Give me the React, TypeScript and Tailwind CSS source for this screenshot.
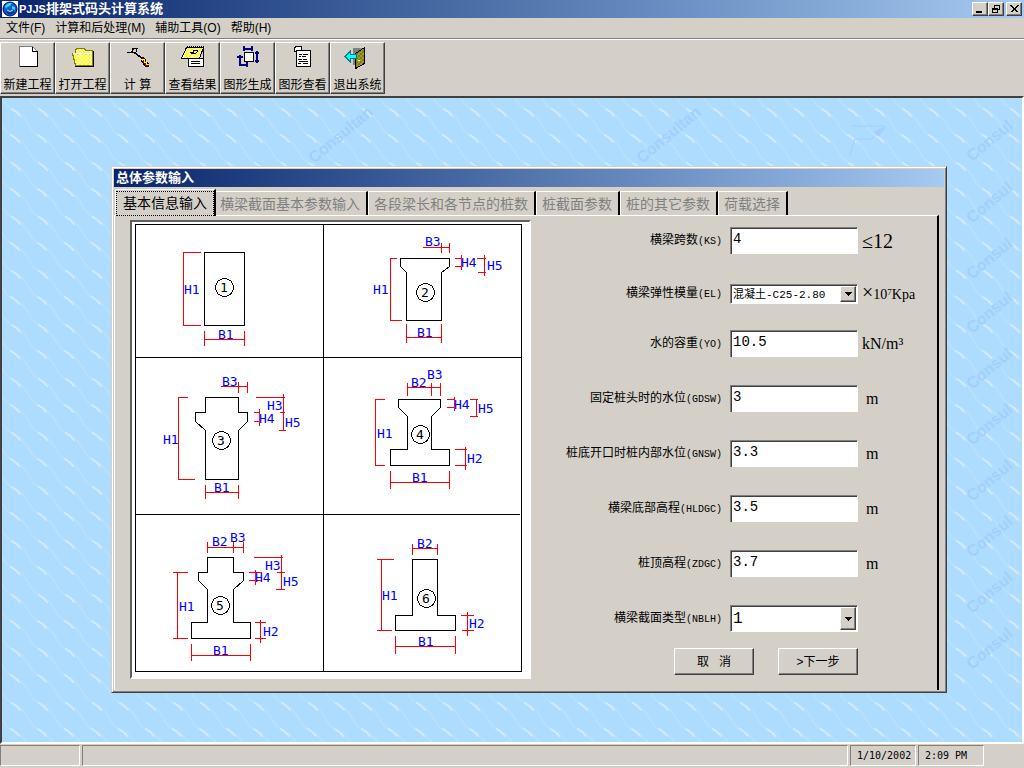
import { useState, type ReactNode } from 'react';

type Line = [number, number, number, number];
type Label = [string, number, number];

interface Section {
  id: number;
  origin: [number, number];
  outline: string;
  dims: Line[];
  labels: Label[];
  badge: [number, number];
}

interface Field {
  id: string;
  name: string;
  code: string;
  value: string;
  options?: string[];
  small?: boolean;
  unit?: ReactNode;
}

const RAISED =
  'border border-t-white border-l-white border-r-[#404040] border-b-[#404040] bg-[#d4d0c8] shadow-[inset_-1px_-1px_0_#808080]';

const SECTIONS: Section[] = [
  {
    id: 1,
    origin: [-2, -2],
    outline: '74,32 114,32 114,105 74,105',
    dims: [
      [53, 32, 53, 105], [52, 32, 70, 32], [52, 105, 70, 105],
      [74, 110, 74, 125], [114, 110, 114, 125], [74, 119, 114, 119],
    ],
    labels: [['H1', 54, 74], ['B1', 88, 119]],
    badge: [94, 67],
  },
  {
    id: 2,
    origin: [188, -2],
    outline: '80,38 129,38 129,46 121,52 121,100 86,100 86,52 80,46',
    dims: [
      [70, 38, 70, 100], [69, 38, 76, 38], [69, 100, 81, 100],
      [86, 103, 86, 122], [121, 103, 121, 122], [86, 117, 121, 117],
      [102, 27, 129, 27], [121, 22, 121, 32], [129, 22, 129, 32],
      [141, 34, 141, 49], [134, 38, 141, 38], [134, 46, 141, 46],
      [164, 34, 164, 55], [156, 38, 165, 38], [157, 52, 165, 52],
    ],
    labels: [['H1', 53, 74], ['B1', 97, 117], ['B3', 105, 26], ['H4', 141, 47], ['H5', 167, 50]],
    badge: [105, 72],
  },
  {
    id: 3,
    origin: [-2, 133],
    outline: '75,42 108,42 108,57 117,57 117,66 108,75 108,124 75,124 75,75 65,66 65,57 75,57',
    dims: [
      [48, 42, 48, 124], [47, 42, 57, 42], [47, 124, 64, 124],
      [75, 129, 75, 143], [108, 129, 108, 143], [75, 137, 108, 137],
      [90, 31, 117, 31], [108, 26, 108, 37], [117, 26, 117, 37],
      [153, 38, 153, 75], [125, 42, 154, 42], [149, 57, 154, 57], [148, 75, 155, 75],
      [129, 53, 129, 70], [123, 57, 129, 57], [123, 66, 129, 66],
    ],
    labels: [['H1', 33, 89], ['B1', 84, 137], ['B3', 92, 31], ['H3', 137, 55], ['H4', 129, 68], ['H5', 155, 72]],
    badge: [91, 85],
  },
  {
    id: 4,
    origin: [188, 133],
    outline: '78,44 120,44 120,52 111,61 111,94 129,94 129,110 70,110 70,94 87,94 87,61 78,52',
    dims: [
      [55, 44, 55, 110], [54, 44, 64, 44], [54, 110, 64, 110],
      [70, 115, 70, 133], [129, 115, 129, 133], [70, 127, 129, 127],
      [87, 32, 120, 32], [87, 27, 87, 40], [111, 27, 111, 40], [120, 27, 120, 40],
      [134, 41, 134, 55], [126, 44, 134, 44], [126, 52, 134, 52],
      [156, 44, 156, 61], [149, 44, 157, 44], [149, 61, 157, 61],
      [145, 91, 145, 114], [134, 94, 146, 94], [134, 110, 146, 110],
    ],
    labels: [
      ['H1', 57, 83], ['B1', 92, 127], ['B2', 91, 32], ['B3', 107, 24],
      ['H4', 134, 54], ['H5', 158, 58], ['H2', 147, 108],
    ],
    badge: [100, 79],
  },
  {
    id: 5,
    origin: [-2, 290],
    outline:
      '77,45 103,45 103,60 113,60 113,68 103,77 103,110 120,110 120,126 61,126 61,110 77,110 77,77 68,68 68,60 77,60',
    dims: [
      [47, 60, 47, 126], [42, 60, 57, 60], [42, 126, 57, 126],
      [77, 35, 113, 35], [77, 29, 77, 40], [103, 29, 103, 40], [113, 29, 113, 40],
      [151, 42, 151, 77], [123, 45, 152, 45], [146, 60, 154, 60], [145, 77, 154, 77],
      [125, 57, 125, 72], [118, 60, 131, 60], [118, 68, 131, 68],
      [130, 107, 130, 130], [124, 110, 135, 110], [124, 126, 135, 126],
      [61, 131, 61, 148], [120, 131, 120, 148], [61, 143, 120, 143],
    ],
    labels: [
      ['H1', 49, 99], ['B1', 83, 143], ['B2', 82, 34], ['B3', 100, 30],
      ['H3', 135, 58], ['H4', 125, 70], ['H5', 153, 74], ['H2', 133, 124],
    ],
    badge: [90, 93],
  },
  {
    id: 6,
    origin: [188, 290],
    outline: '92,47 117,47 117,103 135,103 135,118 75,118 75,103 92,103',
    dims: [
      [61, 47, 61, 118], [56, 47, 73, 47], [56, 118, 71, 118],
      [92, 36, 117, 36], [92, 31, 92, 42], [117, 31, 117, 42],
      [75, 123, 75, 141], [135, 123, 135, 141], [75, 134, 135, 134],
      [147, 99, 147, 123], [140, 103, 153, 103], [141, 118, 153, 118],
    ],
    labels: [['H1', 62, 88], ['B2', 97, 36], ['B1', 98, 134], ['H2', 149, 116]],
    badge: [106, 86],
  },
];

const FIELDS: Field[] = [
  { id: 'ks', name: '横梁跨数', code: '(KS)', value: '4', unit: <span className="text-[20px]">≤12</span> },
  {
    id: 'el',
    name: '横梁弹性模量',
    code: '(EL)',
    value: '混凝土-C25-2.80',
    options: ['混凝土-C25-2.80', '混凝土-C30-3.00'],
    small: true,
    unit: (
      <span className="text-[14px] whitespace-nowrap">
        <span className="text-[20px] leading-none">×</span>10<sup className="text-[9px]">7</sup>Kpa
      </span>
    ),
  },
  { id: 'yo', name: '水的容重', code: '(YO)', value: '10.5', unit: 'kN/m³' },
  { id: 'gdsw', name: '固定桩头时的水位', code: '(GDSW)', value: '3', unit: 'm' },
  { id: 'gnsw', name: '桩底开口时桩内部水位', code: '(GNSW)', value: '3.3', unit: 'm' },
  { id: 'hldgc', name: '横梁底部高程', code: '(HLDGC)', value: '3.5', unit: 'm' },
  { id: 'zdgc', name: '桩顶高程', code: '(ZDGC)', value: '3.7', unit: 'm' },
  { id: 'nblh', name: '横梁截面类型', code: '(NBLH)', value: '1', options: ['1', '2', '3', '4', '5', '6'] },
];

const MENUS = ['文件(F)', '计算和后处理(M)', '辅助工具(O)', '帮助(H)'];

const TABS = ['基本信息输入', '横梁截面基本参数输入', '各段梁长和各节点的桩数', '桩截面参数', '桩的其它参数', '荷载选择'];

const TOOLS: { label: string; icon: ReactNode }[] = [
  {
    label: '新建工程',
    icon: (
      <>
        <path d="M7.5 1.5h13l5 5v15h-18z" fill="#fff" stroke="#808080" />
        <path d="M20.5 1.5v5h5v15h-18" fill="none" stroke="#000" />
      </>
    ),
  },
  {
    label: '打开工程',
    icon: (
      <>
        <path d="M8.500 8V5l2-2h6l2 2h7v3" fill="url(#dither)" stroke="#808000" />
        <path d="M5.500 8.500h20v12h-17z" fill="url(#dither)" stroke="#808000" />
        <path d="M5.500 8.500h19" stroke="#fff" />
        <path d="M8 21.500h18.500M26.500 6v15" stroke="#000" />
      </>
    ),
  },
  {
    label: '计 算',
    icon: (
      <>
        <path d="M5 7.500h7l3 2M10 7.500l1-4h4l-1 3M13 8l8 6" fill="none" stroke="#000" strokeWidth="1.500" />
        <path d="M19 12l3 1 5 7-1 2-3-1-4-6z" fill="#800000" stroke="#000" />
        <path d="M20 14l5 6M22 14l4 6" stroke="#ff0" strokeWidth="1.500" strokeDasharray="2 1" />
      </>
    ),
  },
  {
    label: '查看结果',
    icon: (
      <>
        <path d="M11.500 13.500h15v8h-15z" fill="#fff" stroke="#000" />
        <path d="M9.500 2.500h17l-4 11h-18z" fill="url(#dither)" stroke="#000" />
        <path d="M10 2h17" stroke="#000" strokeWidth="2" strokeDasharray="1 1" />
        <path d="M13 7.500h3l1-2h4M14 8.500h4l3-2M14 16.500h9M14 18.500h9M26.500 3v19" fill="none" stroke="#000" />
      </>
    ),
  },
  {
    label: '图形生成',
    icon: (
      <>
        <path d="M12.500 7.500h9v9h-9z" fill="#fff" stroke="#000" />
        <path d="M12 1v5M20 1v5M12 3.500h8M25 6v12M23 7.500h4M23 15.500h4" stroke="#000080" strokeWidth="2" />
        <path d="M8 10v10M5 11.500h6M7 20h9M15 17v5" stroke="#000080" strokeWidth="2" />
      </>
    ),
  },
  {
    label: '图形查看',
    icon: (
      <>
        <path d="M9.500 5.500h14v16h-14z" fill="#fff" stroke="#000" />
        <path d="M7 3l3-2h4l1 4h-4l-3 2z" fill="#fff" stroke="#000" />
        <path
          d="M12 9.500h3M16 9.500h5M12 11.500h2M15 11.500h4M11 14.500h4M16 14.500h4M12 16.500h9M11 18.500h3M16 18.500h5"
          stroke="#000"
        />
      </>
    ),
  },
  {
    label: '退出系统',
    icon: (
      <>
        <path d="M11 2.500h11v17H11z" fill="#808080" />
        <path d="M13.500 8.500l9-6v16l-9 5z" fill="#808000" stroke="#000" />
        <path d="M15 9l7-4v13l-7 4z" fill="url(#rust)" />
        <path d="M3 11.500l5-5v3h6v4H8v3z" fill="#0ff" stroke="#008080" />
        <path d="M16 15h2" stroke="#fff" />
      </>
    ),
  },
];

function WaterBackground() {
  const marks = [64, 126, 182, 236, 292, 348, 404, 460, 516, 572];
  return (
    <svg className="absolute inset-0 h-full w-full" aria-hidden="true">
      <defs>
        <pattern id="waves" width="27" height="54" patternUnits="userSpaceOnUse">
          <rect width="27" height="54" fill="#addcff" />
          {[-54, -27, 0, 27].map((x) => (
            <g key={x} fill="none" transform={`translate(${x} 0)`}>
              <path d="M0 0q4 9 12 12t15 15q4 9 12 12t15 15" stroke="#b8e0fc" strokeWidth="2" />
              <path d="M10 11q5 3 8 7M36 37q5 3 8 7" stroke="#d2ebfb" strokeWidth="2" strokeLinecap="round" />
            </g>
          ))}
        </pattern>
      </defs>
      <rect width="100%" height="100%" fill="url(#waves)" />
      <g fill="#a2cffb" className="font-['Liberation_Sans',sans-serif] text-[16px] font-bold">
        <text transform="translate(312 66) rotate(-40)">Consultan</text>
        <text transform="translate(640 66) rotate(-40)">Consultan</text>
        {marks.map((y) => (
          <text key={y} transform={`translate(970 ${y}) rotate(-40)`}>
            Consul
          </text>
        ))}
      </g>
      <path d="M849 28h34l-14 13h-16l-5 16" fill="none" stroke="#a2cffb" />
      <path d="M872 33l12-4-8 10z" fill="#a2cffb" />
    </svg>
  );
}

function SectionDrawing({ section }: { section: Section }) {
  const [x, y] = section.origin;
  const [cx, cy] = section.badge;
  return (
    <g transform={`translate(${x} ${y})`}>
      <g transform="translate(0.5 0.5)" fill="none" shapeRendering="crispEdges">
        {section.dims.map(([x1, y1, x2, y2]) => (
          <line key={`${x1}-${y1}-${x2}-${y2}`} x1={x1} y1={y1} x2={x2} y2={y2} stroke="#f00" />
        ))}
        <polygon points={section.outline} stroke="#000" />
        <circle cx={cx} cy={cy} r="9" stroke="#000" />
      </g>
      <g fill="#00f">
        {section.labels.map(([text, lx, ly]) => (
          <text key={text} x={lx} y={ly}>
            {text}
          </text>
        ))}
      </g>
      <text x={cx} y={cy + 5} textAnchor="middle">
        {section.id}
      </text>
    </g>
  );
}

function SectionChart() {
  return (
    <div className="w-[401px] shrink-0 self-start border-2 border-t-[#606060] border-r-white border-b-white border-l-[#606060] bg-white">
      <svg viewBox="0 0 397 455" className="block w-full font-['DejaVu_Sans_Mono',monospace] text-[13px]" role="img">
        <g fill="none" stroke="#000" shapeRendering="crispEdges">
          <rect x="3.5" y="2.5" width="386" height="447" />
          <path d="M191.5 2.5v447M3.5 135.5h386M3.5 292.5h384" />
        </g>
        {SECTIONS.map((section) => (
          <SectionDrawing key={section.id} section={section} />
        ))}
      </svg>
    </div>
  );
}

function FieldRow({ field }: { field: Field }) {
  const [value, setValue] = useState(field.value);
  const height = field.small ? 'h-5' : 'h-[27px]';

  return (
    <div className={`grid grid-cols-[1fr_128px_79px] items-center ${height}`}>
      <label htmlFor={field.id} className="pr-2 text-right text-[12px] leading-4 whitespace-nowrap">
        {field.name}
        <span className="font-['Liberation_Mono',monospace] text-[10px]">{field.code}</span>
      </label>
      {field.options ? (
        <div
          className={`relative border border-t-[#808080] border-r-white border-b-white border-l-[#808080] bg-white shadow-[inset_1px_1px_0_#404040] ${height}`}
        >
          <select
            id={field.id}
            value={value}
            onChange={(event) => setValue(event.target.value)}
            className={`h-full w-full appearance-none bg-transparent pr-5 pl-0.5 font-['Liberation_Mono','Noto_Sans_CJK_SC',monospace] outline-none ${
              field.small ? 'text-[11px]' : 'text-[16px]'
            }`}
          >
            {field.options.map((option) => (
              <option key={option}>{option}</option>
            ))}
          </select>
          <span
            className={`pointer-events-none absolute inset-y-px right-px flex w-4 items-center justify-center ${RAISED}`}
          >
            <svg width="7" height="4" shapeRendering="crispEdges">
              <path d="M0 0h7L3.500 4z" />
            </svg>
          </span>
        </div>
      ) : (
        <input
          id={field.id}
          type="text"
          value={value}
          onChange={(event) => setValue(event.target.value)}
          className="h-[27px] w-full border-t border-r border-l border-t-[#808080] border-r-white border-l-[#808080] bg-white pb-1 pl-0.5 font-['Liberation_Mono',monospace] text-[14px] shadow-[inset_1px_1px_0_#404040] outline-none"
        />
      )}
      <span
        className={`flex items-center font-['Liberation_Serif',serif] text-[16px] leading-5 ${
          field.unit === 'm' ? 'pl-2' : 'pl-1'
        }`}
      >
        {field.unit}
      </span>
    </div>
  );
}

function ParameterDialog() {
  const [activeTab] = useState(0);

  return (
    <section
      className="relative border border-t-[#d4d0c8] border-r-[#404040] border-b-[#404040] border-l-[#d4d0c8] bg-[#d4d0c8] p-0.5 shadow-[inset_1px_1px_0_#fff,inset_-1px_-1px_0_#808080]"
      aria-label="总体参数输入"
    >
      <h2 className="h-[18px] bg-linear-to-r from-[#0a246a] to-[#a6caf0] pl-0.5 text-[13px] leading-[18px] font-bold text-white">
        总体参数输入
      </h2>
      <div className="flex items-end pt-0.5 pl-px" role="tablist">
        {TABS.map((tab, index) => (
          <button
            key={tab}
            type="button"
            role="tab"
            aria-selected={index === activeTab}
            disabled={index !== activeTab}
            className={`border-t border-r-2 border-l border-t-white border-r-black border-l-white bg-[#d4d0c8] text-[14px] leading-5 whitespace-nowrap ${
              index === activeTab
                ? 'relative z-10 -mr-0.5 -mb-px h-[27px]'
                : 'h-6 pr-[6px] pl-[5px] text-[#808080]'
            }`}
          >
            {index === activeTab ? (
              <span className="block h-[25px] border border-dotted border-black px-1.5 leading-[22px]">{tab}</span>
            ) : (
              tab
            )}
          </button>
        ))}
      </div>
      <div
        className="mr-[5px] flex border-t border-r-2 border-l border-t-white border-r-black border-l-white pt-1 pb-[11px] pl-[15px]"
        role="tabpanel"
      >
        <SectionChart />
        <form className="flex-1 pt-[7px]" onSubmit={(event) => event.preventDefault()}>
          <div className="flex flex-col gap-7">
            {FIELDS.map((field) => (
              <FieldRow key={field.id} field={field} />
            ))}
          </div>
          <div className="mt-4 flex justify-end gap-6 pr-[79px]">
            <button type="button" className={`h-[27px] w-20 text-[12px] whitespace-pre ${RAISED}`}>
              {'取   消'}
            </button>
            <button type="submit" className={`h-[27px] w-20 text-[12px] ${RAISED}`}>
              &gt;下一步
            </button>
          </div>
        </form>
      </div>
    </section>
  );
}

function WindowButton({ label, children }: { label: string; children: ReactNode }) {
  return (
    <button type="button" aria-label={label} className={`flex h-3.5 w-4 items-center justify-center ${RAISED}`}>
      <svg width="12" height="10" viewBox="0 0 12 10" fill="none" stroke="#000" shapeRendering="crispEdges">
        {children}
      </svg>
    </button>
  );
}

export default function App() {
  return (
    <div className="flex min-h-screen flex-col bg-[#d4d0c8] font-['Liberation_Sans','Noto_Sans_CJK_SC',sans-serif] text-[12px] text-black">
      <header className="flex h-[18px] items-center bg-linear-to-r from-[#0a246a] to-[#a6caf0] px-0.5">
        <svg width="16" height="16" viewBox="0 0 16 16" aria-hidden="true">
          <rect width="16" height="16" fill="#fff" />
          <circle cx="8" cy="8" r="7" fill="#0060d0" stroke="#000060" />
          <path d="M3 5q3-4 7-3l-2 3-3 1-1 2zM10 5l3 1v3l-3-1z" fill="#40d0ff" />
          <path d="M4 9q4 5 8 0v3q-4 3-7 0z" fill="#003090" />
          <path d="M5 9q3 3 6 0" fill="none" stroke="#a0f0ff" />
        </svg>
        <h1 className="ml-px flex flex-1 items-center text-[13px] leading-4 font-bold whitespace-nowrap text-white">
          <span className="text-[11px]">PJJS</span>排架式码头计算系统
        </h1>
        <WindowButton label="最小化">
          <path d="M2 8h6" strokeWidth="2" />
        </WindowButton>
        <WindowButton label="还原">
          <path d="M4.500 4V1.500h5v4H8M4 1.500h6M2.500 4.500h5v4h-5zM2 5h6" />
        </WindowButton>
        <span className="w-0.5" />
        <WindowButton label="关闭">
          <path d="M2.500 1.500l7 7M3.500 1.500l7 7M9.500 1.500l-7 7M10.500 1.500l-7 7" />
        </WindowButton>
      </header>

      <nav className="flex h-[21px] items-center border-b border-[#808080] pl-px">
        {MENUS.map((menu) => (
          <button key={menu} type="button" className="px-[5px] leading-4">
            {menu}
          </button>
        ))}
      </nav>

      <div className="flex h-[57px] border-t border-white pt-0.5" role="toolbar">
        <svg width="0" height="0" className="absolute" aria-hidden="true">
          <defs>
            <pattern id="dither" width="4" height="4" patternUnits="userSpaceOnUse">
              <rect width="4" height="4" fill="#ff0" />
              <path d="M0 0h2v2H0zM2 2h2v2H2z" fill="#fff8d8" />
            </pattern>
            <pattern id="rust" width="4" height="4" patternUnits="userSpaceOnUse">
              <rect width="4" height="4" fill="#808000" />
              <path d="M0 0h2v2H0zM2 2h2v2H2z" fill="#a09840" />
            </pattern>
          </defs>
        </svg>
        {TOOLS.map((tool) => (
          <button
            key={tool.label}
            type="button"
            className={`flex h-[52px] w-[55px] flex-col items-center pt-0.5 leading-4 whitespace-nowrap ${RAISED}`}
          >
            <svg width="32" height="24" viewBox="0 0 32 24" shapeRendering="crispEdges" aria-hidden="true">
              {tool.icon}
            </svg>
            <span className="mt-2">{tool.label}</span>
          </button>
        ))}
      </div>

      <main className="relative flex-1 border-2 border-t-[#404040] border-r-white border-b-white border-l-[#404040] pt-[68px] pr-[75px] pb-12 pl-[109px]">
        <WaterBackground />
        <ParameterDialog />
      </main>

      <footer className="flex h-6 gap-0.5 pt-px pr-10 pb-0.5 font-['DejaVu_Sans_Mono',monospace] text-[10px] leading-5">
        <span className="w-20 border border-t-[#808080] border-r-white border-b-white border-l-[#808080]" />
        <span className="flex-1 border border-t-[#808080] border-r-white border-b-white border-l-[#808080]" />
        <span className="w-[66px] border border-t-[#808080] border-r-white border-b-white border-l-[#808080] pl-1.5 whitespace-nowrap">
          1/10/2002
        </span>
        <span className="w-[66px] border border-t-[#808080] border-r-white border-b-white border-l-[#808080] pl-1.5 whitespace-nowrap">
          2:09 PM
        </span>
      </footer>
    </div>
  );
}
